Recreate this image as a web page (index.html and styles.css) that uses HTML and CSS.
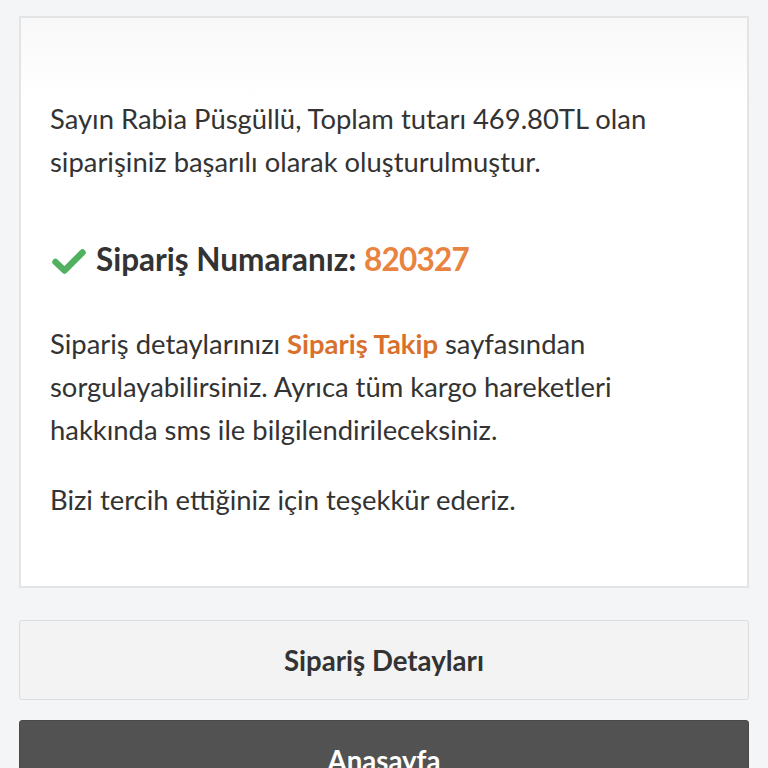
FILE: index.html
```html
<!DOCTYPE html>
<html lang="tr">
<head>
<meta charset="utf-8">
<link rel="stylesheet" href="styles.css">
</head>
<body>
<div class="page">
  <div class="card">
    <p class="intro">Sayın Rabia Püsgüllü, Toplam tutarı 469.80TL olan siparişiniz başarılı olarak oluşturulmuştur.</p>
    <h2 class="order"><svg class="check" viewBox="0 0 34 26" width="34" height="26"><path d="M3.5 14 L12.5 22.5 L30.5 4.5" fill="none" stroke="#52b161" stroke-width="6.5" stroke-linecap="round" stroke-linejoin="round"/></svg>Sipariş Numaranız: <span class="num">820327</span></h2>
    <p class="info">Sipariş detaylarınızı <a class="link" href="#">Sipariş Takip</a> sayfasından sorgulayabilirsiniz. Ayrıca tüm kargo hareketleri hakkında sms ile bilgilendirileceksiniz.</p>
    <p class="thanks">Bizi tercih ettiğiniz için teşekkür ederiz.</p>
  </div>
  <a class="btn btn-light" href="#">Sipariş Detayları</a>
  <a class="btn btn-dark" href="#">Anasayfa</a>
</div>
</body>
</html>
```
FILE: styles.css
```css
html, body {
  margin: 0;
  padding: 0;
  background: #f4f5f7;
  font-family: "Lato", "Open Sans", sans-serif;
  color: #333;
}
.page {
  padding: 16px 19px 0 19px;
  display: flex;
  flex-direction: column;
}
.card {
  background: linear-gradient(#f8f8f9 0, #fff 80px);
  border: 2px solid #e3e4e6;
  padding: 79px 29px 65px 29px;
}
.intro, .info, .thanks {
  margin: 0;
  font-size: 27.4px;
  line-height: 43px;
}
.order {
  margin: 56px 0 43px 0;
  font-size: 31.5px;
  line-height: 40px;
  font-weight: 700;
}
.check {
  vertical-align: -3px;
  margin: 0 10px 0 2px;
}
.num {
  color: #e8843f;
  letter-spacing: -0.8px;
}
.link {
  color: #d9702c;
  font-weight: 700;
  text-decoration: none;
}
.thanks {
  margin-top: 27px;
}
.btn {
  display: flex;
  align-items: center;
  justify-content: center;
  height: 78px;
  font-size: 27.6px;
  font-weight: 700;
  text-decoration: none;
  border-radius: 3px;
}
.btn-light {
  margin-top: 32px;
  background: #f3f3f3;
  border: 1px solid #dcdcdc;
  color: #333;
}
.btn-dark {
  margin-top: 20px;
  background: #525252;
  border: 1px solid #4a4a4a;
  color: #fff;
}
```
